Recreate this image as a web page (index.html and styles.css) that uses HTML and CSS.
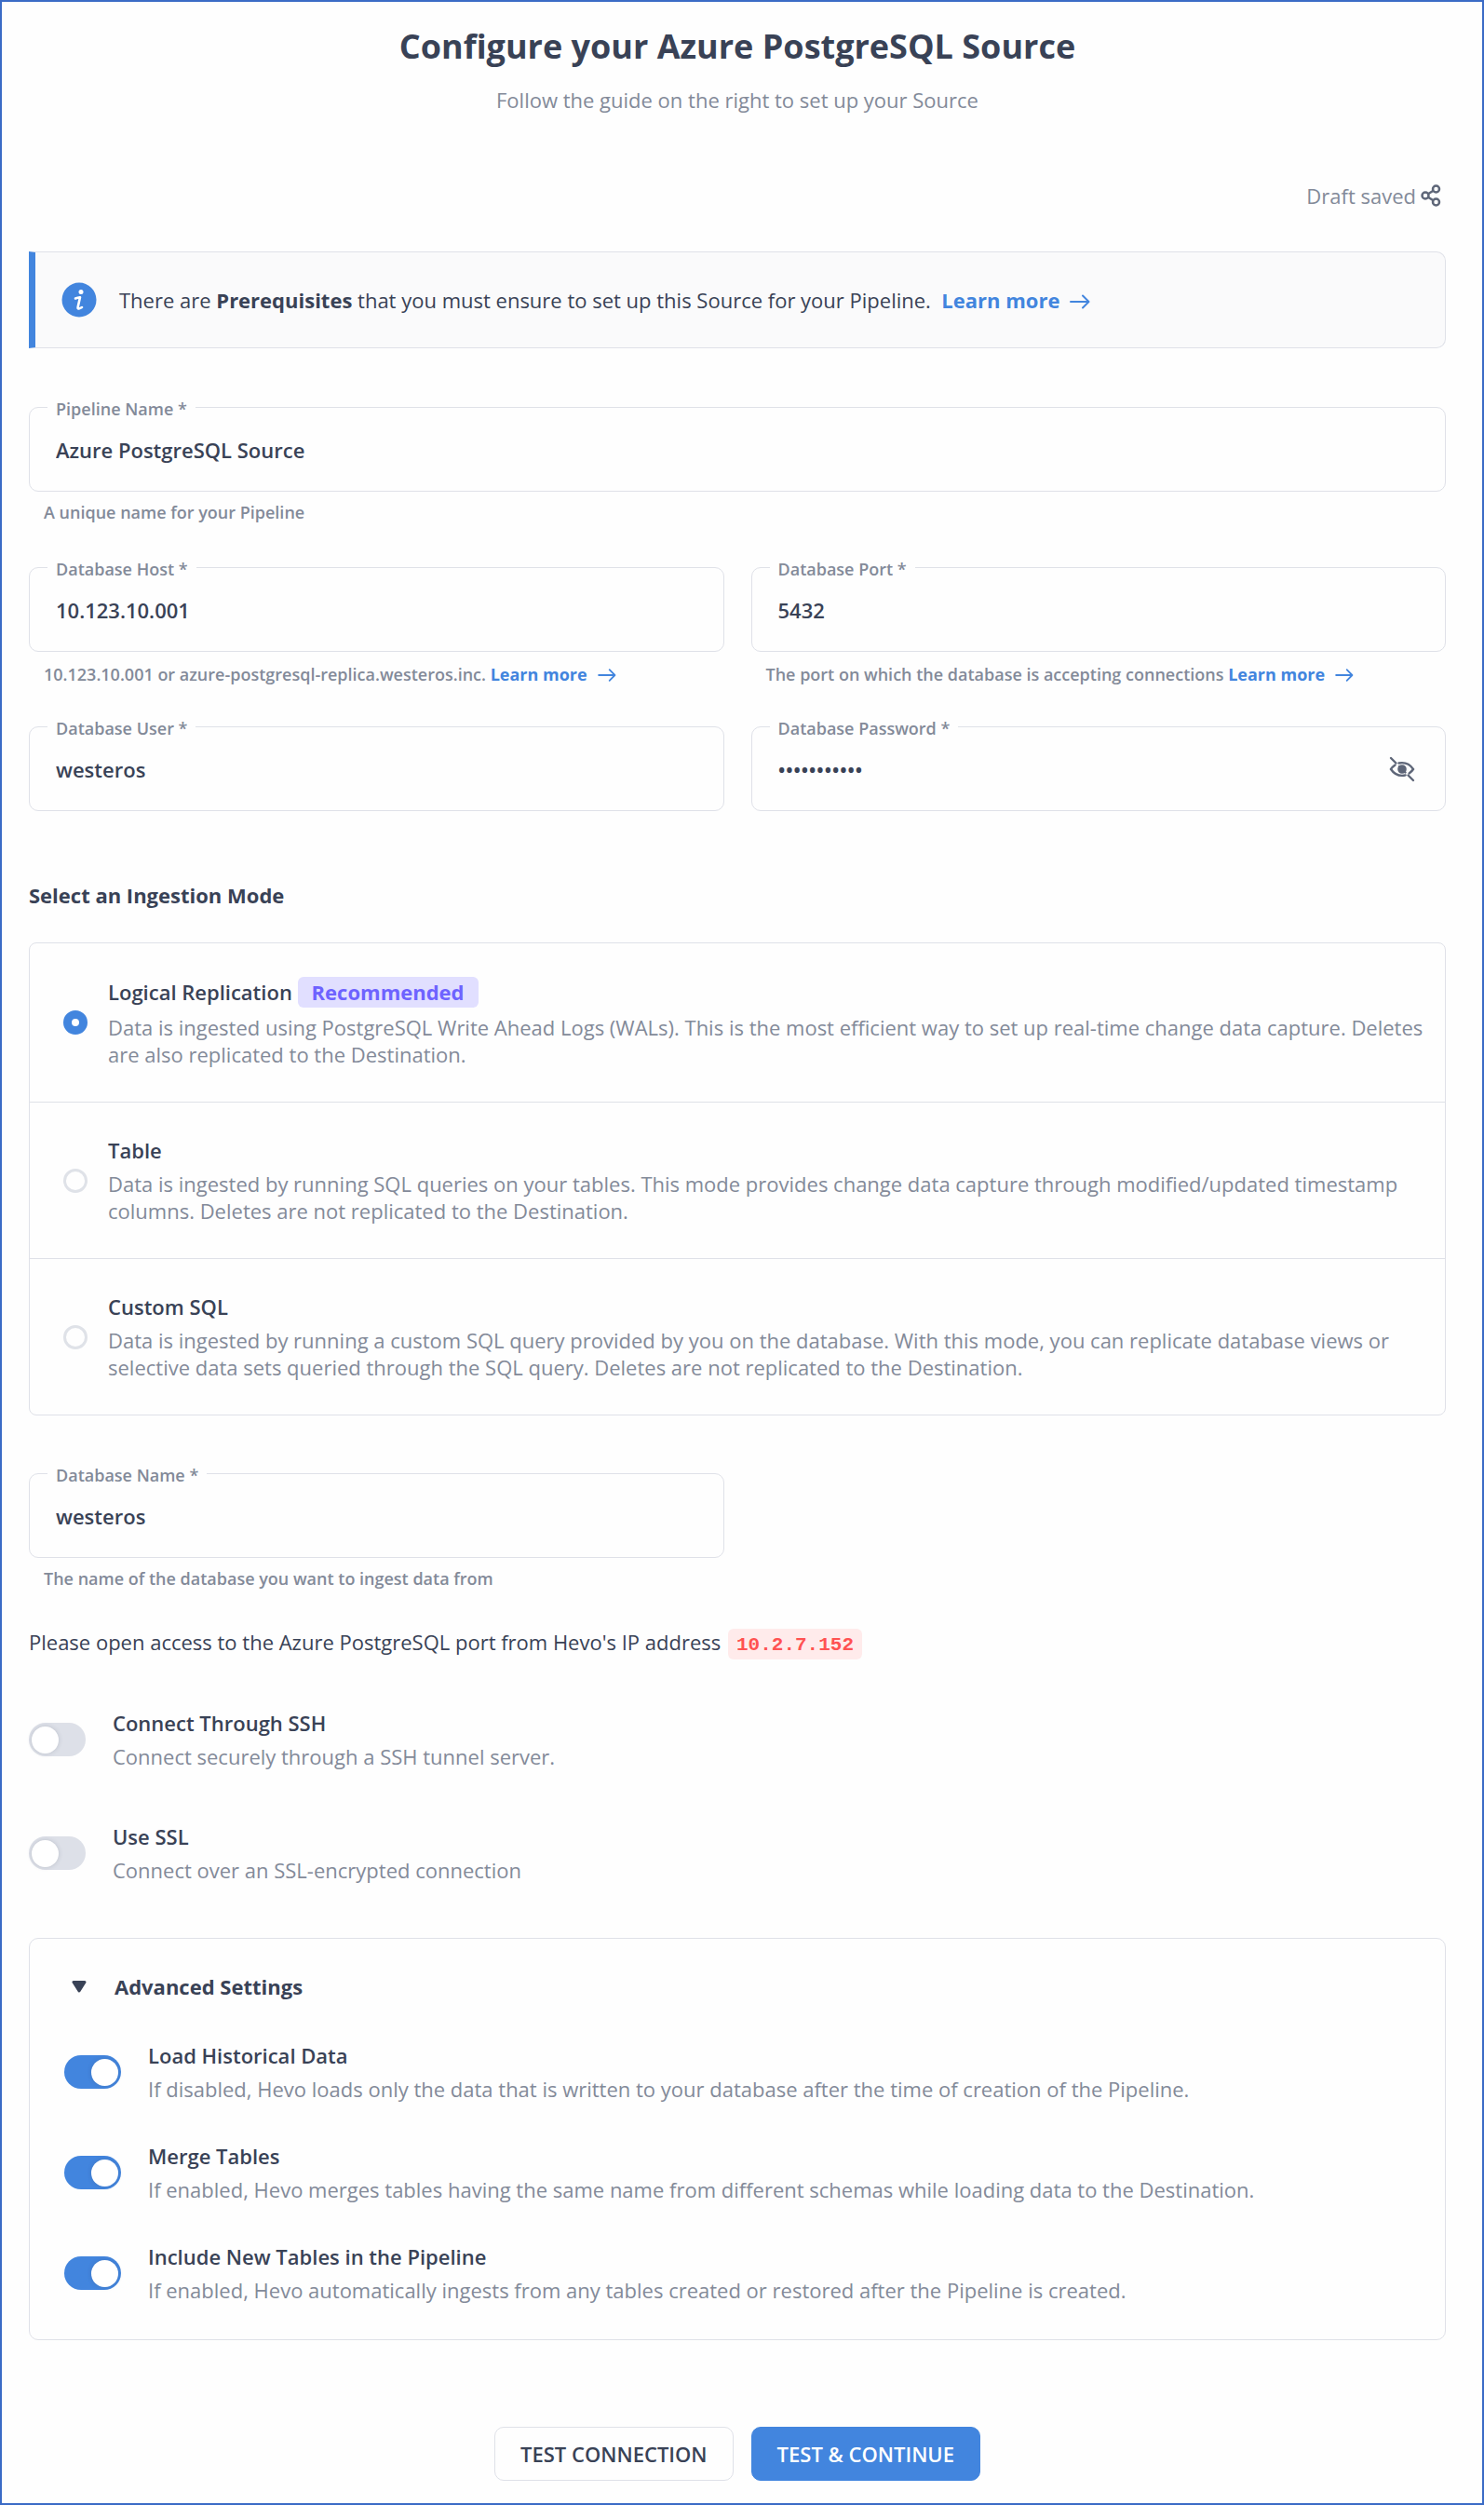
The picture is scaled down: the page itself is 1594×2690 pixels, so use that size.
FILE: index.html
```html
<!DOCTYPE html>
<html lang="en">
<head>
  <meta charset="UTF-8">
  <meta name="viewport" content="width=device-width, initial-scale=1">
  <title>Configure your Azure PostgreSQL Source</title>
  <link rel="stylesheet" href="styles.css">
</head>
<body>
  <!-- Shared icons -->
  <svg class="sprite" aria-hidden="true">
    <symbol id="arrow" viewBox="0 0 22 18">
      <path d="M1 9h19M14 2.500l6.500 6.500-6.500 6.500" fill="none" stroke="currentColor" stroke-width="2" stroke-linecap="round" stroke-linejoin="round"/>
    </symbol>
  </svg>

  <main class="page">
    <header class="page-header">
      <h1>Configure your Azure PostgreSQL Source</h1>
      <p>Follow the guide on the right to set up your Source</p>
    </header>

    <div class="draft">
      <span>Draft saved</span>
      <button type="button" class="icon-btn" aria-label="Share draft">
        <svg width="24" height="24" viewBox="0 0 24 24" fill="none" stroke="currentColor" stroke-width="2.500">
          <circle cx="6" cy="12" r="3.500"/>
          <circle cx="17.500" cy="5" r="3.500"/>
          <circle cx="17.500" cy="19" r="3.500"/>
          <path d="M9 10.200l5.500-3.400M9 13.800l5.500 3.400"/>
        </svg>
      </button>
    </div>

    <div class="banner">
      <svg class="info" width="38" height="38" viewBox="0 0 38 38">
        <circle cx="19" cy="19" r="18.500" fill="#4285de"/>
        <circle cx="21" cy="10.500" r="2.500" fill="#fff"/>
        <path d="M15 17.500q2.500-.8 5-1.300l-2.300 10.300q-.5 2.300 1 2 1.500-.3 3.300-1.500" fill="none" stroke="#fff" stroke-width="2.600" stroke-linecap="round" stroke-linejoin="round"/>
      </svg>
      <p>There are <strong>Prerequisites</strong> that you must ensure to set up this Source for your Pipeline.&nbsp; <a class="more" href="#">Learn more<svg width="22" height="18"><use href="#arrow"/></svg></a></p>
    </div>

    <form>
      <!-- Connection details -->
      <div class="field">
        <div class="box">
          <label for="pipeline">Pipeline Name *</label>
          <input id="pipeline" type="text" value="Azure PostgreSQL Source">
        </div>
        <p class="hint">A unique name for your Pipeline</p>
      </div>

      <div class="columns">
        <div class="field">
          <div class="box">
            <label for="host">Database Host *</label>
            <input id="host" type="text" value="10.123.10.001">
          </div>
          <p class="hint linked">10.123.10.001 or azure-postgresql-replica.westeros.inc. <a class="more" href="#">Learn more<svg width="20" height="16"><use href="#arrow"/></svg></a></p>
        </div>
        <div class="field">
          <div class="box">
            <label for="port">Database Port *</label>
            <input id="port" type="text" value="5432">
          </div>
          <p class="hint linked">The port on which the database is accepting connections <a class="more" href="#">Learn more<svg width="20" height="16"><use href="#arrow"/></svg></a></p>
        </div>
      </div>

      <div class="columns">
        <div class="field">
          <div class="box">
            <label for="user">Database User *</label>
            <input id="user" type="text" value="westeros">
          </div>
        </div>
        <div class="field">
          <div class="box">
            <label for="password">Database Password *</label>
            <input id="password" type="password" value="westeros123">
            <button type="button" class="icon-btn" aria-label="Show password">
              <svg width="28" height="28" viewBox="0 0 28 28" fill="none" stroke="currentColor" stroke-width="2.400" stroke-linecap="round">
                <path d="M2 2l5.500 5.500M20.500 20.500l5.500 5.500"/>
                <path d="M6.500 9.500Q3.500 11.600 2 14q4.600 6.900 12 6.900 2 0 3.600-.5M10.500 7.500Q12 7.100 14 7.100q7.400 0 12 6.900-1.500 2.400-4.400 4.400"/>
                <circle cx="14" cy="14" r="3.600" fill="currentColor"/>
                <path d="M11 11l6.500 6.500"/>
              </svg>
            </button>
          </div>
        </div>
      </div>

      <!-- Ingestion mode -->
      <h2 id="mode-title">Select an Ingestion Mode</h2>
      <div class="modes" role="radiogroup" aria-labelledby="mode-title">
        <label class="mode">
          <input type="radio" name="mode" checked>
          <span class="text">
            <span class="name">Logical Replication <span class="badge">Recommended</span></span>
            <span class="desc">Data is ingested using PostgreSQL Write Ahead Logs (WALs). This is the most efficient way to set up real-time change data capture. Deletes are also replicated to the Destination.</span>
          </span>
        </label>
        <label class="mode">
          <input type="radio" name="mode">
          <span class="text">
            <span class="name">Table</span>
            <span class="desc">Data is ingested by running SQL queries on your tables. This mode provides change data capture through modified/updated timestamp columns. Deletes are not replicated to the Destination.</span>
          </span>
        </label>
        <label class="mode">
          <input type="radio" name="mode">
          <span class="text">
            <span class="name">Custom SQL</span>
            <span class="desc">Data is ingested by running a custom SQL query provided by you on the database. With this mode, you can replicate database views or selective data sets queried through the SQL query. Deletes are not replicated to the Destination.</span>
          </span>
        </label>
      </div>

      <div class="columns database">
        <div class="field">
          <div class="box">
            <label for="dbname">Database Name *</label>
            <input id="dbname" type="text" value="westeros">
          </div>
          <p class="hint">The name of the database you want to ingest data from</p>
        </div>
      </div>

      <p class="access">Please open access to the Azure PostgreSQL port from Hevo's IP address <code>10.2.7.152</code></p>

      <!-- Connection options -->
      <div class="options">
        <label class="option">
          <input class="switch" type="checkbox">
          <span class="text">
            <span class="name">Connect Through SSH</span>
            <span class="desc">Connect securely through a SSH tunnel server.</span>
          </span>
        </label>
        <label class="option">
          <input class="switch" type="checkbox">
          <span class="text">
            <span class="name">Use SSL</span>
            <span class="desc">Connect over an SSL-encrypted connection</span>
          </span>
        </label>
      </div>

      <!-- Advanced settings -->
      <details class="advanced" open>
        <summary>
          <svg width="16" height="13" viewBox="0 0 16 13"><path d="M2 1.500h12L8 11z" fill="currentColor" stroke="currentColor" stroke-width="3" stroke-linejoin="round"/></svg>
          Advanced Settings
        </summary>
        <div class="settings">
          <label class="option">
            <input class="switch" type="checkbox" checked>
            <span class="text">
              <span class="name">Load Historical Data</span>
              <span class="desc">If disabled, Hevo loads only the data that is written to your database after the time of creation of the Pipeline.</span>
            </span>
          </label>
          <label class="option">
            <input class="switch" type="checkbox" checked>
            <span class="text">
              <span class="name">Merge Tables</span>
              <span class="desc">If enabled, Hevo merges tables having the same name from different schemas while loading data to the Destination.</span>
            </span>
          </label>
          <label class="option">
            <input class="switch" type="checkbox" checked>
            <span class="text">
              <span class="name">Include New Tables in the Pipeline</span>
              <span class="desc">If enabled, Hevo automatically ingests from any tables created or restored after the Pipeline is created.</span>
            </span>
          </label>
        </div>
      </details>

      <div class="actions">
        <button type="button" class="btn">TEST CONNECTION</button>
        <button type="submit" class="btn primary">TEST &amp; CONTINUE</button>
      </div>
    </form>
  </main>
</body>
</html>
```

FILE: styles.css
```css
* { box-sizing: border-box; }
body { margin: 0; font-family: "Open Sans", sans-serif; font-size: 22px; line-height: 30px; color: #394256; background: #fefefe; }
h1, h2, p { margin: 0; }
input, button { font: inherit; color: inherit; margin: 0; }
a { color: #4285de; text-decoration: none; }
.sprite { position: absolute; width: 0; height: 0; }

.page { min-height: 100vh; padding: 24px 39px 24px 29px; border: 2px solid #3b6bc6; }
.page-header { text-align: center; }
.page-header h1 { font-size: 36px; line-height: 48px; font-weight: 700; margin-bottom: 18px; }
.page-header p { color: #838a99; }

.draft { display: flex; justify-content: flex-end; align-items: center; gap: 4px; margin: 73px 4px 45px 0; color: #838a99; }
.icon-btn { display: flex; padding: 0; border: 0; background: none; color: #5e6678; cursor: pointer; }

/* Prerequisites banner */
.banner { display: flex; align-items: center; gap: 24px; min-height: 104px; padding: 0 28px; margin-bottom: 63px; background: #fafafb; border: 1px solid #dfe1e8; border-left: 7px solid #4285de; border-radius: 0 10px 10px 0; }
.info { flex: none; }
.more { font-weight: 700; white-space: nowrap; }
.more svg { margin-left: 11px; vertical-align: -2px; }

/* Text fields */
.box { position: relative; display: flex; align-items: center; height: 91px; padding: 0 28px; border: 1px solid #dfe1e8; border-radius: 10px; }
.box label { position: absolute; top: -11px; left: 19px; padding: 0 9px; font-size: 18px; line-height: 24px; font-weight: 600; color: #838a99; background: #fefefe; }
.box input { flex: 1; min-width: 0; padding: 0; border: 0; outline: 0; background: none; font-weight: 600; }
.box .icon-btn { margin-left: 16px; margin-right: 4px; }
.hint { padding: 10px 16px 0; font-size: 18px; line-height: 24px; font-weight: 600; color: #838a99; }
.hint.linked { padding-top: 12px; }
.columns { display: grid; grid-template-columns: 1fr 1fr; gap: 29px; margin-top: 47px; }
.columns + .columns { margin-top: 44px; }

/* Ingestion mode */
h2 { margin: 75px 0 36px; font-size: 22px; line-height: 30px; font-weight: 700; }
.modes { border: 1px solid #dfe1e8; border-radius: 8px; }
.mode { display: flex; align-items: center; gap: 22px; padding: 36px 20px 36px 36px; cursor: pointer; }
.mode + .mode { border-top: 1px solid #dfe1e8; }
.mode input { flex: none; appearance: none; width: 26px; height: 26px; border: 3px solid #dfe2e8; border-radius: 50%; }
.mode input:checked { border: 9px solid #4285de; }
.text { display: flex; flex-direction: column; gap: 6px; }
.name { font-weight: 600; }
.desc { color: #838a99; }
.mode .text { gap: 7px; }
.mode .desc { line-height: 29px; }
.badge { display: inline-block; padding: 0 15px; line-height: 33px; font-weight: 700; color: #6e63ff; background: #e1dfff; border-radius: 6px; }
.database { margin-top: 62px; }

.access { margin: 40px 0 53px; line-height: 33px; }
code { display: inline-block; margin-left: 2px; padding: 3px 9px 0; font-family: "Liberation Mono", monospace; font-size: 21px; line-height: 30px; font-weight: 700; color: #ff5252; background: #ffebeb; border-radius: 6px; }

/* Switches */
.options { display: flex; flex-direction: column; gap: 56px; }
.option { display: flex; align-items: center; gap: 29px; cursor: pointer; }
.switch { flex: none; display: flex; align-items: center; appearance: none; width: 61px; height: 36px; padding: 0 3px; border-radius: 18px; background: #dde0e8; cursor: pointer; }
.switch::before { content: ""; width: 29px; height: 29px; border-radius: 50%; background: #fff; box-shadow: 0 0 5px rgba(57, 66, 86, 0.2); }
.switch:checked { justify-content: flex-end; background: #4285de; }

.advanced { margin-top: 58px; padding: 36px 37px 38px; border: 1px solid #dfe1e8; border-radius: 10px; }
.advanced summary { display: flex; align-items: center; gap: 30px; padding-left: 8px; list-style: none; font-weight: 700; cursor: pointer; }
.settings { display: flex; flex-direction: column; gap: 42px; margin-top: 44px; }

.actions { display: flex; justify-content: center; gap: 19px; margin-top: 93px; }
.btn { height: 58px; padding: 0 27px; border: 1px solid #dfe1e8; border-radius: 10px; background: #fefefe; font-weight: 600; cursor: pointer; }
.btn.primary { border-color: #4285de; background: #4285de; color: #fff; }
```
